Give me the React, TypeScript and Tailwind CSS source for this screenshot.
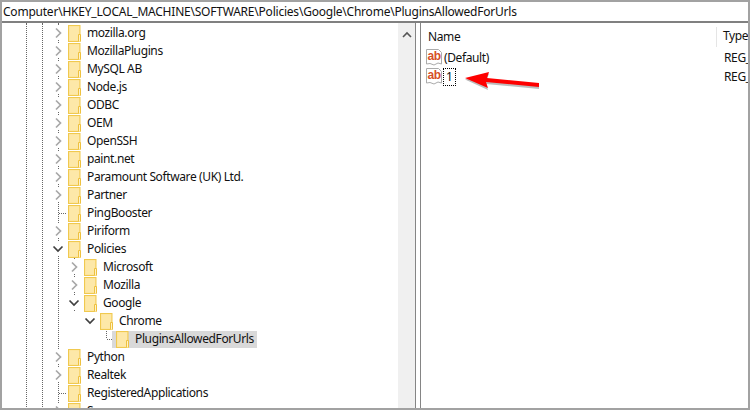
const path = "Computer\\HKEY_LOCAL_MACHINE\\SOFTWARE\\Policies\\Google\\Chrome\\PluginsAllowedForUrls";

type Kind = "closed" | "open" | "leaf";

type TreeRow = { name: string; depth: number; kind: Kind; selected?: boolean };

const rows: TreeRow[] = [
  { name: "mozilla.org", depth: 0, kind: "closed" },
  { name: "MozillaPlugins", depth: 0, kind: "closed" },
  { name: "MySQL AB", depth: 0, kind: "closed" },
  { name: "Node.js", depth: 0, kind: "closed" },
  { name: "ODBC", depth: 0, kind: "closed" },
  { name: "OEM", depth: 0, kind: "closed" },
  { name: "OpenSSH", depth: 0, kind: "closed" },
  { name: "paint.net", depth: 0, kind: "closed" },
  { name: "Paramount Software (UK) Ltd.", depth: 0, kind: "closed" },
  { name: "Partner", depth: 0, kind: "closed" },
  { name: "PingBooster", depth: 0, kind: "leaf" },
  { name: "Piriform", depth: 0, kind: "closed" },
  { name: "Policies", depth: 0, kind: "open" },
  { name: "Microsoft", depth: 1, kind: "closed" },
  { name: "Mozilla", depth: 1, kind: "closed" },
  { name: "Google", depth: 1, kind: "open" },
  { name: "Chrome", depth: 2, kind: "open" },
  { name: "PluginsAllowedForUrls", depth: 3, kind: "leaf", selected: true },
  { name: "Python", depth: 0, kind: "closed" },
  { name: "Realtek", depth: 0, kind: "closed" },
  { name: "RegisteredApplications", depth: 0, kind: "leaf" },
  { name: "Samsung", depth: 0, kind: "closed" },
];

function Folder() {
  return (
    <svg width="13" height="17" viewBox="0 0 13 17" className="shrink-0">
      <rect x="0.5" y="0.5" width="11.5" height="16" fill="#fde295" stroke="#f0c94f" />
      <rect x="1.5" y="1.5" width="9.5" height="14" fill="#fde8a8" />
      <path d="M10.5 16.5V9.5H12.5V16.5" fill="#fff2c8" stroke="#eec13f" />
    </svg>
  );
}

function Toggle({ kind }: { kind: Kind }) {
  if (kind === "leaf") {
    return (
      <div className="w-[16px] h-[14px] shrink-0 flex items-center justify-end pr-[2px]">
        <div className="w-[7px] border-t border-dotted border-[#666]" />
      </div>
    );
  }
  return (
    <div className="relative w-[16px] h-[14px] shrink-0 bg-white flex items-center">
      <svg width="12" height="12" viewBox="0 0 12 12">
        {kind === "closed" ? (
          <path d="M4 1.5L8.5 6L4 10.5" fill="none" stroke="#a8a8a8" strokeWidth="1.7" />
        ) : (
          <path d="M1.5 3.5L6 8L10.5 3.5" fill="none" stroke="#404040" strokeWidth="1.7" />
        )}
      </svg>
    </div>
  );
}

function Row({ row }: { row: TreeRow }) {
  return (
    <div className="h-[18px] flex items-center" style={{ paddingLeft: 50 + row.depth * 16 }}>
      <Toggle kind={row.kind} />
      <div className={row.selected ? "flex items-center h-[17px] bg-[#d9d9d9] -ml-[4px] pl-[4px] pr-[3px]" : "flex items-center h-[18px]"}>
        <Folder />
        <span className="ml-[6px] whitespace-nowrap">{row.name}</span>
      </div>
    </div>
  );
}

function Guide({ x, top, height }: { x: number; top: number; height: number }) {
  return (
    <div
      className="absolute border-l border-dotted border-[#666]"
      style={{ left: x, top, height }}
    />
  );
}

function StringIcon() {
  return (
    <svg width="17" height="17" viewBox="0 0 17 17" className="shrink-0">
      <path d="M0.5 0.5H12.5L15.5 3.5V15L12 14L8 16L4 14.5L0.5 15Z" fill="#fff" stroke="#ababab" />
      <text x="1.5" y="10.5" fontSize="12" fontWeight="700" fill="#d64f28" fontFamily="'Liberation Sans', sans-serif">
        ab
      </text>
    </svg>
  );
}

export default function App() {
  return (
    <div className="w-[750px] h-[410px] border-2 border-[#a2a2a2] bg-white flex flex-col overflow-hidden text-[12px] text-[#111] font-['Noto_Sans',sans-serif]">
      <div className="h-[19px] shrink-0 pl-px flex items-center whitespace-nowrap tracking-[-0.22px]">{path}</div>
      <div className="h-[2px] shrink-0 bg-[#808080]" />
      <div className="flex-1 min-h-0 flex tracking-[-0.38px]">
        <div className="relative w-[396px] shrink-0 overflow-hidden pt-px">
          <Guide x={24} top={0} height={390} />
          <Guide x={40} top={0} height={390} />
          <Guide x={56} top={0} height={390} />
          <Guide x={72} top={234} height={54} />
          <Guide x={104} top={306} height={9} />
          <div className="relative">
            {rows.map((row) => (
              <Row key={row.name} row={row} />
            ))}
          </div>
        </div>
        <div className="w-[17px] shrink-0 bg-[#f0f0f0] flex justify-center pt-[8px]">
          <svg width="10" height="8" viewBox="0 0 10 8">
            <path d="M1 6L5 2L9 6" fill="none" stroke="#555" strokeWidth="1.6" />
          </svg>
        </div>
        <div className="w-px shrink-0 bg-[#858585]" />
        <div className="w-[4px] shrink-0" />
        <div className="w-px shrink-0 bg-[#858585]" />
        <div className="relative flex-1 min-w-0 overflow-hidden">
          <div className="h-[25px] flex items-center">
            <div className="w-[296px] h-[20px] mt-[2px] pl-[7px] flex items-center border-r border-[#e5e5e5] shrink-0">Name</div>
            <div className="pl-[6px]">Type</div>
          </div>
          <div className="h-[19px] flex items-center">
            <div className="w-[297px] pl-[5px] flex items-center shrink-0">
              <StringIcon />
              <span className="ml-px">(Default)</span>
            </div>
            <div className="pl-[6px] whitespace-nowrap">REG_SZ</div>
          </div>
          <div className="h-[19px] flex items-center">
            <div className="w-[297px] pl-[5px] flex items-center shrink-0">
              <StringIcon />
              <span className="h-[18px] pl-[2px] pr-[3px] flex items-center border border-dotted border-black">1</span>
            </div>
            <div className="pl-[6px] whitespace-nowrap">REG_SZ</div>
          </div>
          <svg width="90" height="30" viewBox="0 0 90 30" className="absolute left-[41px] top-[43px]">
            <path d="M3 12.5L27 6.5L25 12.5L77 18V22L24 17L26 23Z" fill="#6b6b6b" opacity="0.45" transform="translate(0 1)" />
            <path d="M3 12L27 6L25 12L77 17V21L24 16L26 22Z" fill="#fe0000" />
          </svg>
        </div>
      </div>
    </div>
  );
}
